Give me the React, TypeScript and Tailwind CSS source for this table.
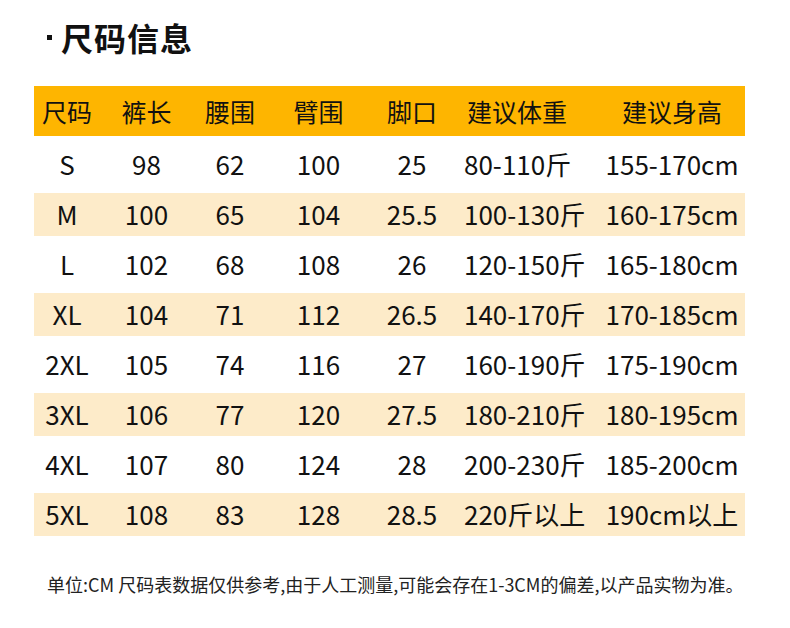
import React from "react";

const headers = ["尺码", "裤长", "腰围", "臂围", "脚口", "建议体重", "建议身高"];
const rows: string[][] = [
  ["S", "98", "62", "100", "25", "80-110斤", "155-170cm"],
  ["M", "100", "65", "104", "25.5", "100-130斤", "160-175cm"],
  ["L", "102", "68", "108", "26", "120-150斤", "165-180cm"],
  ["XL", "104", "71", "112", "26.5", "140-170斤", "170-185cm"],
  ["2XL", "105", "74", "116", "27", "160-190斤", "175-190cm"],
  ["3XL", "106", "77", "120", "27.5", "180-210斤", "180-195cm"],
  ["4XL", "107", "80", "124", "28", "200-230斤", "185-200cm"],
  ["5XL", "108", "83", "128", "28.5", "220斤以上", "190cm以上"],
];

const cellCls = [
  "w-[72px] pr-[6px]",
  "w-[81px]",
  "w-[86px]",
  "w-[91px]",
  "w-[100px] pr-[4px]",
  "w-[130px] pr-[24px]",
  "w-[151px] pl-[5px]",
];

function Row({ cells, bg }: { cells: string[]; bg: string }) {
  return (
    <div className={`flex h-[43px] items-center ${bg}`}>
      {cells.map((c, i) => (
        <div key={i} className={`${cellCls[i]} shrink-0 text-center whitespace-nowrap`}>
          {c}
        </div>
      ))}
    </div>
  );
}

export default function App() {
  return (
    <div
      className="w-[790px] h-[628px] bg-white text-[#111] overflow-hidden"
      style={{ fontFamily: '"Noto Sans CJK SC", "Noto Sans", sans-serif' }}
    >
      <div className="flex items-center pl-[47px] pt-[17px] h-[56px]">
        <span className="w-[5px] h-[5px] bg-[#111] mr-[9px] mt-[2px]" />
        <span className="text-[32px] font-bold leading-none tracking-[1px]">尺码信息</span>
      </div>
      <div className="ml-[34px] w-[711px] mt-[30px] leading-none">
        <div className="flex h-[50px] items-center bg-[#FEB500] text-[25px]">
          {headers.map((h, i) => (
            <div key={i} className={`${cellCls[i]} shrink-0 text-center whitespace-nowrap`}>
              {h}
            </div>
          ))}
        </div>
        <div className="mt-[3px] text-[26px]">
          {rows.map((r, i) => (
            <div key={i} className="h-[50px] py-[3.5px]">
              <Row cells={r} bg={i % 2 === 1 ? "bg-[#FDEBC9]" : "bg-white"} />
            </div>
          ))}
        </div>
      </div>
      <div className="pl-[47px] mt-[36px] text-[18px] leading-none text-[#222] whitespace-nowrap">
        单位:CM 尺码表数据仅供参考,由于人工测量,可能会存在1-3CM的偏差,以产品实物为准。
      </div>
    </div>
  );
}
